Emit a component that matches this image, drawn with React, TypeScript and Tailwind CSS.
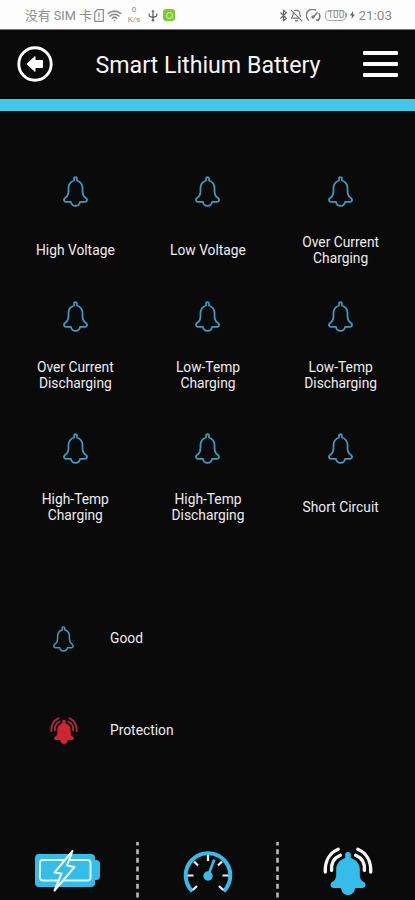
import { Bluetooth, BellOff, Wifi } from "lucide-react";

const alarms = [
  ["High Voltage"],
  ["Low Voltage"],
  ["Over Current", "Charging"],
  ["Over Current", "Discharging"],
  ["Low-Temp", "Charging"],
  ["Low-Temp", "Discharging"],
  ["High-Temp", "Charging"],
  ["High-Temp", "Discharging"],
  ["Short Circuit"],
];

const bellPath =
  "M10.6 2.3Q10.6 1 12 1T13.4 2.3V4.4C16.6 5.6 18.6 8 18.8 11.2V14.5C18.8 18 19.7 19.8 22.2 21.3C23.9 22.8 23.2 25 21.2 25H16.4C16 27.6 14.3 28.9 12 28.9S8 27.6 7.6 25H2.8C.8 25 .1 22.8 1.8 21.3C4.3 19.8 5.2 18 5.2 14.5V11.2C5.4 8 7.4 5.6 10.6 4.4Z";

function Bell({ className }: { className: string }) {
  return (
    <svg viewBox="0 0 24 30" fill="none" stroke="#4199bd" strokeWidth="1.7" strokeLinejoin="round" className={className}>
      <path d={bellPath} />
    </svg>
  );
}

interface RingingBellProps {
  color: string;
  waves: string;
  className: string;
}

function RingingBell({ color, waves, className }: RingingBellProps) {
  return (
    <svg viewBox="0 0 50 48" fill="none" className={className}>
      <g stroke={waves} strokeWidth="3.4" strokeLinecap="round">
        <path d="M15.2 2.3C6.5 6 1.8 14.5 2.3 25" />
        <path d="M17.3 8.3C11 11 8 16.5 8.6 23.3" />
        <path d="M34.8 2.3C43.5 6 48.2 14.5 47.7 25" />
        <path d="M32.7 8.3C39 11 42 16.5 41.4 23.3" />
      </g>
      <path
        d="M22.2 7.5Q22.2 5 25 5T27.8 7.5V11C33.2 12.5 36.8 17 36.8 22V27C36.8 31.5 38 33.5 41 35C43.8 37.5 42.3 41 39.3 41H32C31.5 45.5 28.7 48 25 48S18.5 45.5 18 41H10.7C7.7 41 6.2 37.5 9 35C12 33.5 13.2 31.5 13.2 27V22C13.2 17 16.8 12.5 22.2 11Z"
        fill={color}
      />
    </svg>
  );
}

function StatusBar() {
  return (
    <div className="flex h-[30px] shrink-0 items-center border-b border-[#777] bg-[#fdfdfd] pt-px pr-[23px] pl-[25px] font-['Roboto','Noto_Sans_CJK_SC',sans-serif] text-[#8b8b8b]">
      <span className="w-[69px] pt-0.5 text-[12.8px] leading-none whitespace-nowrap">没有 SIM 卡</span>
      <svg viewBox="0 0 10 13" fill="none" stroke="currentColor" className="h-[13px] w-2.5">
        <path d="M3.3.7H9.3V12.3H.7V3.3ZM5 3.5V8M5 9.5V10.7" strokeWidth="1.2" />
      </svg>
      <Wifi className="ml-[3px] size-[15px]" strokeWidth={2.6} />
      <div className="ml-1 flex w-4 flex-col items-center text-[8px] leading-[10px]">
        <span>0</span>
        <span>K/s</span>
      </div>
      <svg viewBox="0 0 10 13" fill="none" stroke="#666" strokeWidth="1.3" className="ml-[6px] h-[13px] w-2.5">
        <path d="M5 2V12M1.2 4.5V6.5Q1.2 7.5 5 8.5Q8.8 7.5 8.8 6.5V4.5" />
        <path d="M5 .5L6.6 3H3.4Z" fill="#666" stroke="none" />
        <circle cx="5" cy="11.3" r="1.3" fill="#666" stroke="none" />
      </svg>
      <div className="ml-[5px] flex size-3 items-center justify-center rounded-[3px] bg-[#7bce2b]">
        <div className="size-[7px] rounded-full border border-[#d9f3bd]" />
      </div>
      <div className="ml-auto flex items-center">
        <Bluetooth className="size-[13px] text-[#666]" strokeWidth={2.2} />
        <BellOff className="size-[13px] text-[#777]" strokeWidth={2.2} />
        <svg viewBox="0 0 15 13" fill="none" stroke="#777" strokeWidth="1.5" className="ml-[3px] h-[13px] w-[15px]">
          <path d="M3 11.5A6 6 0 0 1 10 1.3M12.8 4.2A6 6 0 0 1 12 11.5L10 10.5M7.5 8L11.5 3.2" />
          <circle cx="7" cy="8" r="1" />
        </svg>
        <div className="ml-1 flex h-[11px] w-[21px] items-center justify-center rounded-[4px] border border-[#aaa] text-[10px] leading-none">
          100
        </div>
        <div className="h-1 w-px bg-[#999]" />
        <svg viewBox="0 0 5 8" fill="#666" className="mx-[3px] h-2 w-[5px]">
          <path d="M3 0L0 4.5H2L1.5 8L5 3.5H3Z" />
        </svg>
        <span className="pt-px text-[13.5px] leading-none">21:03</span>
      </div>
    </div>
  );
}

function Header() {
  return (
    <header className="flex h-[80.5px] shrink-0 items-center justify-between border-b-[12.5px] border-[#42c8e8] pr-[17px] pl-[17px]">
      <button type="button" aria-label="Back">
        <svg viewBox="0 0 36 36" className="size-9">
          <circle cx="18" cy="18" r="16.2" fill="none" stroke="#fff" strokeWidth="2.9" />
          <path d="M10 18L18 10.5V14.5H25.5V21.5H18V25.5Z" fill="#fff" stroke="#fff" strokeLinejoin="round" />
        </svg>
      </button>
      <h1 className="pt-0.5 text-[23.2px] leading-none text-[#f3f3f3]">Smart Lithium Battery</h1>
      <button type="button" aria-label="Menu" className="flex w-[35px] flex-col gap-[7px]">
        <span className="h-1 rounded-[1px] bg-white" />
        <span className="h-1 rounded-[1px] bg-white" />
        <span className="h-1 rounded-[1px] bg-white" />
      </button>
    </header>
  );
}

function Divider() {
  return (
    <svg viewBox="0 0 3 58" className="h-[58px] w-[3px] shrink-0">
      <path d="M1.5 0V58" stroke="#b9b9b9" strokeWidth="2.6" strokeDasharray="5 3.65" strokeDashoffset="1.5" />
    </svg>
  );
}

function BatteryIcon() {
  return (
    <svg viewBox="0 0 65 44" className="h-11 w-[65px]">
      <path d="M4 5H56Q60 5 60 9V11H61Q65 11 65 15V27Q65 31 61 31H60V34Q60 38 56 38H4Q0 38 0 34V9Q0 5 4 5Z" fill="#35bdea" />
      <rect x="5" y="11" width="50.5" height="20.5" rx="3" fill="none" stroke="#dcf7ff" strokeWidth="2" />
      <path d="M37.5 2L19.5 23.5L26.5 24.5L19.5 41.5L39.5 18L32 16.5Z" fill="#35bdea" stroke="#f0fbff" strokeWidth="2" strokeLinejoin="round" />
    </svg>
  );
}

function GaugeIcon() {
  return (
    <svg viewBox="0 0 50 44" fill="none" className="h-11 w-[50px]">
      <path d="M9.3 41.3A22.3 22.3 0 1 1 40.7 41.3" stroke="#35bdea" strokeWidth="4" />
      <path
        d="M25 5V11M4.5 25.5H10.5M39.5 25.5H45.5M11 11.5L15 15.5M39 11.5L35 15.5M9.8 40L14 36M40.2 40L36 36"
        stroke="#eee"
        strokeWidth="2.2"
      />
      <path d="M25 26L31.2 9.5" stroke="#35bdea" strokeWidth="2.6" />
      <circle cx="25" cy="26" r="4.7" fill="#35bdea" />
    </svg>
  );
}

export default function App() {
  return (
    <div className="flex h-[900px] w-[415px] flex-col overflow-hidden bg-[#0a0a0a] font-['Roboto',sans-serif] text-[#ededed]">
      <StatusBar />
      <Header />

      <main className="flex flex-1 flex-col pt-[65px]">
        <div className="grid grid-cols-3 grid-rows-[125px_132px_100px] pr-2 pl-[9px]">
          {alarms.map((lines) => (
            <div key={lines.join(" ")} className="flex flex-col items-center">
              <Bell className="h-[31px] w-[25px]" />
              <div className="mt-[27px] flex h-8 flex-col justify-center text-center text-[13.8px] leading-4">
                {lines.map((line) => (
                  <span key={line}>{line}</span>
                ))}
              </div>
            </div>
          ))}
        </div>

        <div className="mt-[90px] flex flex-col gap-[60px] pl-[50px] text-[13.8px]">
          <div className="flex h-8 items-center">
            <div className="flex w-[60px]">
              <Bell className="ml-[3px] h-[26px] w-[21px]" />
            </div>
            <span>Good</span>
          </div>
          <div className="flex h-8 items-center">
            <div className="flex w-[60px]">
              <RingingBell color="#cf2434" waves="#a32c3c" className="h-[27px] w-7" />
            </div>
            <span>Protection</span>
          </div>
        </div>
      </main>

      <nav className="flex h-[58px] shrink-0">
        <div className="flex w-[136px] justify-center pt-[7px] pr-[2px]">
          <BatteryIcon />
        </div>
        <Divider />
        <div className="flex w-[137px] justify-center pt-2">
          <GaugeIcon />
        </div>
        <Divider />
        <div className="flex flex-1 justify-center pt-[5px] pl-[2px]">
          <RingingBell color="#35bdea" waves="#f5f5f5" className="h-12 w-[50px]" />
        </div>
      </nav>
    </div>
  );
}
